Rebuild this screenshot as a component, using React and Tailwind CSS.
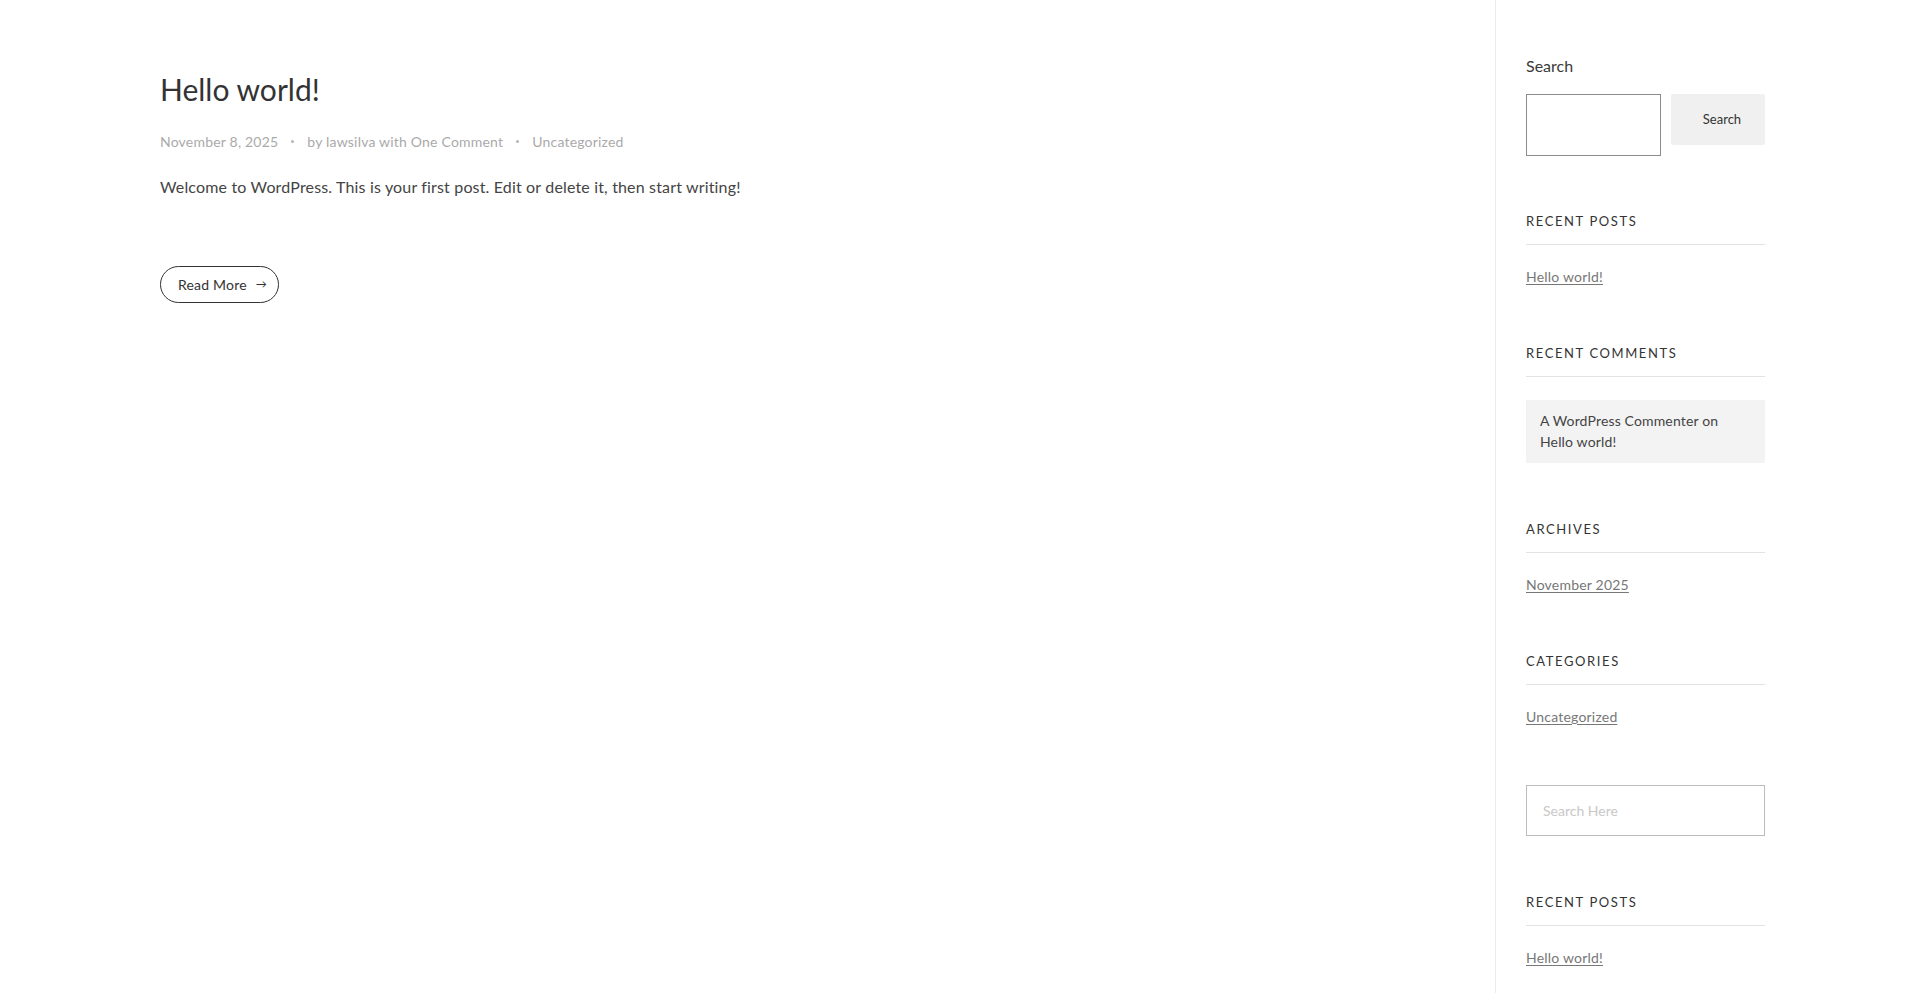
import React from "react";

const font = { fontFamily: "Lato, 'Open Sans', sans-serif" };

function Dot() {
  return <span className="inline-block w-[3px] h-[3px] rounded-full bg-[#b5b5b5] mx-[13px] relative top-[-1px]" />;
}

function Heading({ children }) {
  return (
    <h2 className="text-[13px] leading-[20px] tracking-[1.6px] uppercase text-[#333] pb-[13px] border-b border-[#e3e3e3] font-normal">
      {children}
    </h2>
  );
}

function LinkItem({ children }) {
  return (
    <a href="#" className="mt-[22px] block w-fit text-[14px] leading-[20px] tracking-[0.2px] text-[#777] underline underline-offset-2">
      {children}
    </a>
  );
}

export default function App() {
  return (
    <div className="flex min-h-[993px] bg-white" style={font}>
      <main className="flex-1 pt-[71px] pl-[160px]">
        <h1 className="text-[30px] leading-[36px] text-[#333] font-normal">Hello world!</h1>
        <div className="mt-[25px] flex items-center text-[14px] leading-[20px] tracking-[0.2px] text-[#aaa]">
          <span>November 8, 2025</span>
          <Dot />
          <span>by lawsilva with One Comment</span>
          <Dot />
          <span>Uncategorized</span>
        </div>
        <p className="mt-[23px] text-[16px] leading-[24px] tracking-[0.16px] text-[#444]">
          Welcome to WordPress. This is your first post. Edit or delete it, then start writing!
        </p>
        <a
          href="#"
          className="mt-[67px] flex items-center w-[119px] h-[37px] rounded-full border border-[#333] pl-[17px] text-[14px] tracking-[0.2px] text-[#333]"
        >
          <span>Read More</span>
          <span className="ml-[9px] text-[11px]">→</span>
        </a>
      </main>
      <aside className="w-[425px] border-l border-[#ececec] pt-[54px] pl-[30px]">
        <div className="w-[239px] flex flex-col">
          <label className="text-[16px] leading-[24px] text-[#3a3a3a]">Search</label>
          <div className="mt-[16px] flex items-start gap-[10px]">
            <div className="w-[135px] h-[62px] border border-[#8c8c8c]" />
            <button className="w-[94px] h-[51px] bg-[#f0f0f0] rounded-[2px] text-[13px] text-[#333] pl-[8px]">
              Search
            </button>
          </div>

          <section className="mt-[55px]">
            <Heading>Recent Posts</Heading>
            <LinkItem>Hello world!</LinkItem>
          </section>

          <section className="mt-[56px]">
            <Heading>Recent Comments</Heading>
            <div className="mt-[23px] h-[63px] bg-[#f3f3f3] px-[14px] pt-[10px] text-[14px] leading-[21px] tracking-[0.15px] text-[#444]">
              A WordPress Commenter on
              <br />
              Hello world!
            </div>
          </section>

          <section className="mt-[56px]">
            <Heading>Archives</Heading>
            <LinkItem>November 2025</LinkItem>
          </section>

          <section className="mt-[56px]">
            <Heading>Categories</Heading>
            <LinkItem>Uncategorized</LinkItem>
          </section>

          <div className="mt-[58px] h-[51px] border border-[#bdbdbd] flex items-center px-[16px] text-[14px] text-[#c8c8c8]">
            Search Here
          </div>

          <section className="mt-[56px]">
            <Heading>Recent Posts</Heading>
            <LinkItem>Hello world!</LinkItem>
          </section>
        </div>
      </aside>
    </div>
  );
}
